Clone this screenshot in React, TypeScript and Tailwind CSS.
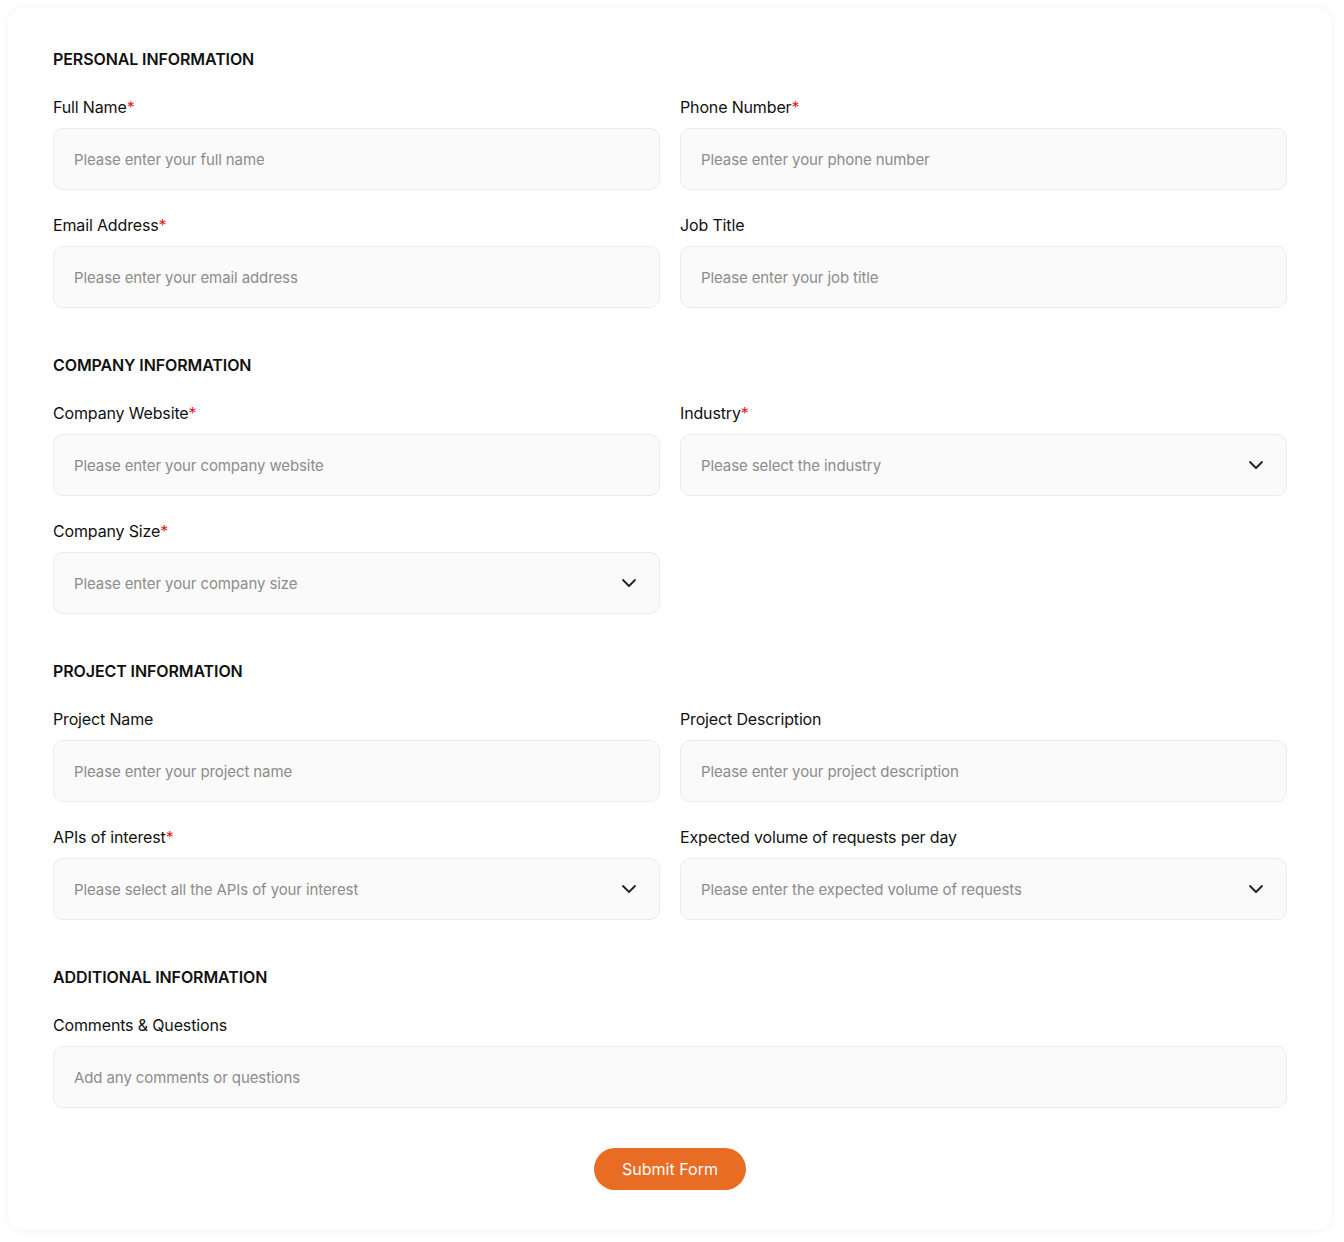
import React from "react";
import { ChevronDown } from "lucide-react";

const font = { fontFamily: "Inter, 'Noto Sans', sans-serif" };

function Label({ text, required }: { text: string; required?: boolean }) {
  return (
    <div className="text-[16px] leading-[24px] text-[#111] mb-[9px] tracking-[-0.15px]">
      {text}
      {required && <span className="text-[#e11d1d]">*</span>}
    </div>
  );
}

function Field({
  label,
  placeholder,
  required,
  select,
}: {
  label: string;
  placeholder: string;
  required?: boolean;
  select?: boolean;
}) {
  return (
    <div className="flex flex-col">
      <Label text={label} required={required} />
      <div className="h-[62px] rounded-[10px] border border-[#ececec] bg-[#fafafa] flex items-center justify-between pl-[20px] pr-[18px]">
        <span className="text-[15px] text-[#8c8c8c] pt-[2px] tracking-[-0.1px]">{placeholder}</span>
        {select && <ChevronDown size={24} strokeWidth={1.8} className="text-[#222]" />}
      </div>
    </div>
  );
}

function Section({ title, children, first }: { title: string; children: React.ReactNode; first?: boolean }) {
  return (
    <div className={first ? "" : "mt-[45px]"}>
      <div className="text-[16px] leading-[24px] font-semibold text-[#111] mb-[24px] tracking-[-0.1px]">{title}</div>
      <div className="grid grid-cols-2 gap-x-[20px] gap-y-[23px]">{children}</div>
    </div>
  );
}

export default function App() {
  return (
    <div className="min-h-screen bg-white pl-[8px] pr-[12px] pt-[8px] pb-[12px]" style={font}>
      <div className="rounded-[16px] bg-white shadow-[0_0_8px_rgba(0,0,0,0.06)] px-[45px] pt-[39px] pb-[40px]">
        <Section title="PERSONAL INFORMATION" first>
          <Field label="Full Name" required placeholder="Please enter your full name" />
          <Field label="Phone Number" required placeholder="Please enter your phone number" />
          <Field label="Email Address" required placeholder="Please enter your email address" />
          <Field label="Job Title" placeholder="Please enter your job title" />
        </Section>
        <Section title="COMPANY INFORMATION">
          <Field label="Company Website" required placeholder="Please enter your company website" />
          <Field label="Industry" required placeholder="Please select the industry" select />
          <Field label="Company Size" required placeholder="Please enter your company size" select />
        </Section>
        <Section title="PROJECT INFORMATION">
          <Field label="Project Name" placeholder="Please enter your project name" />
          <Field label="Project Description" placeholder="Please enter your project description" />
          <Field label="APIs of interest" required placeholder="Please select all the APIs of your interest" select />
          <Field label="Expected volume of requests per day" placeholder="Please enter the expected volume of requests" select />
        </Section>
        <div className="mt-[45px]">
          <div className="text-[16px] leading-[24px] font-semibold text-[#111] mb-[24px] tracking-[-0.1px]">ADDITIONAL INFORMATION</div>
          <Field label="Comments & Questions" placeholder="Add any comments or questions" />
        </div>
        <div className="flex justify-center mt-[40px]">
          <button className="h-[42px] w-[152px] rounded-full bg-[#e86c24] text-white text-[16px]">Submit Form</button>
        </div>
      </div>
    </div>
  );
}
